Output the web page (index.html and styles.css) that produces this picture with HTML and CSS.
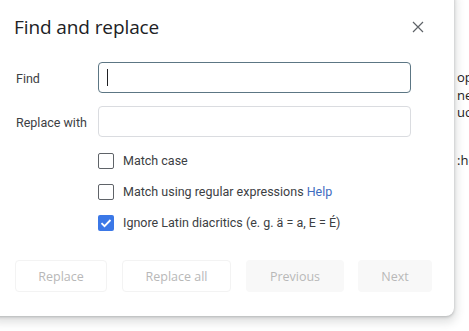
FILE: index.html
```html
<!DOCTYPE html>
<html>
<head>
<meta charset="utf-8">
<link rel="stylesheet" href="styles.css">
</head>
<body>
<div class="doc">
  <p class="line">op</p>
  <p class="line">ne</p>
  <p class="line">uc</p>
  <p class="line gap">:ho</p>
</div>
<div class="dialog">
  <div class="header">
    <h1 class="title">Find and replace</h1>
    <svg class="close" width="12" height="12" viewBox="0 0 12 12"><path d="M1 1L11 11M11 1L1 11" stroke="#5f6368" stroke-width="1.2" fill="none"/></svg>
  </div>
  <div class="form">
    <label class="label">Find</label>
    <div class="input focused"><span class="caret"></span></div>
    <label class="label">Replace with</label>
    <div class="input"></div>
  </div>
  <div class="options">
    <div class="option"><span class="box"></span><span class="text">Match case</span></div>
    <div class="option"><span class="box"></span><span class="text">Match using regular expressions <a class="help">Help</a></span></div>
    <div class="option"><span class="box checked"><svg width="16" height="16" viewBox="0 0 16 16"><path d="M3.5 8.2L6.5 11.2L12.5 5" stroke="#fff" stroke-width="1.8" fill="none"/></svg></span><span class="text">Ignore Latin diacritics (e. g. ä = a, E = É)</span></div>
  </div>
  <div class="buttons">
    <div class="btn outline b1">Replace</div>
    <div class="btn outline b2">Replace all</div>
    <div class="btn filled b3">Previous</div>
    <div class="btn filled b4">Next</div>
  </div>
</div>
</body>
</html>
```
FILE: styles.css
```css
html, body {
  margin: 0;
  padding: 0;
  background: #fff;
  width: 469px;
  height: 331px;
  overflow: hidden;
  font-family: Roboto, "Liberation Sans", sans-serif;
}
.doc {
  padding: 69px 0 0 457px;
  font-family: "Open Sans", sans-serif;
  font-size: 13px;
  color: #222;
}
.line {
  margin: 0;
  height: 17.5px;
  line-height: 17.5px;
  white-space: nowrap;
}
.line.gap {
  margin-top: 30px;
}
.dialog {
  position: absolute;
  left: -10px;
  top: -10px;
  width: 464px;
  height: 326px;
  background: #fff;
  border-radius: 8px;
  box-shadow: 0 1px 3px rgba(60,64,67,0.3), 0 4px 8px 3px rgba(60,64,67,0.15);
  box-sizing: border-box;
  padding: 10px 0 0 10px;
}
.header {
  display: flex;
  align-items: center;
  justify-content: space-between;
  height: 44px;
  padding: 10px 0 0 14px;
  box-sizing: border-box;
}
.title {
  margin: 0;
  font-family: "Open Sans", sans-serif;
  font-weight: 400;
  font-size: 19px;
  color: #202124;
  letter-spacing: -0.1px;
}
.close {
  margin-right: 30px;
}
.form {
  display: grid;
  grid-template-columns: 82px 313px;
  grid-auto-rows: 31px;
  row-gap: 13px;
  padding: 18px 0 0 16px;
  align-items: center;
}
.label {
  font-size: 12.5px;
  color: #3c4043;
  padding-top: 1px;
}
.input {
  height: 31px;
  box-sizing: border-box;
  border: 1px solid #dadce0;
  border-radius: 4px;
  display: flex;
  align-items: center;
  padding-left: 8px;
}
.input.focused {
  border-color: #5c7684;
}
.caret {
  width: 1px;
  height: 17px;
  background: #202124;
}
.options {
  display: flex;
  flex-direction: column;
  gap: 14px;
  padding: 15px 0 0 98px;
}
.option {
  display: flex;
  align-items: center;
  gap: 9px;
  height: 17px;
}
.box {
  width: 16px;
  height: 16px;
  box-sizing: border-box;
  border: 1.5px solid #5f6368;
  border-radius: 2px;
  display: flex;
}
.box.checked {
  border: none;
  background: #3b78e7;
}
.text {
  font-size: 12.5px;
  color: #3c4043;
}
.help {
  color: #3f6dbf;
}
.buttons {
  display: flex;
  padding: 29px 0 0 15px;
}
.btn {
  height: 32px;
  box-sizing: border-box;
  display: flex;
  align-items: center;
  justify-content: center;
  border-radius: 4px;
  font-family: "Open Sans", sans-serif;
  font-size: 12.5px;
  color: #b8b8b8;
}
.outline {
  border: 1px solid #f3f3f3;
  background: #fff;
}
.filled {
  background: #f8f8f8;
}
.b1 { width: 92px; margin-right: 15px; }
.b2 { width: 109px; margin-right: 15px; }
.b3 { width: 98px; margin-right: 14px; }
.b4 { width: 74px; }
```
